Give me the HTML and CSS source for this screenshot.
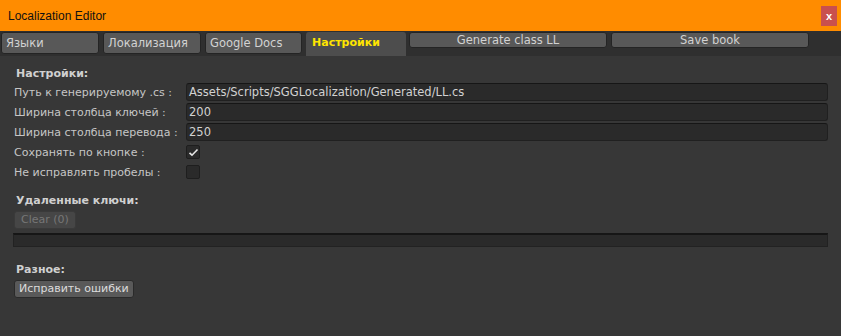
FILE: index.html
```html
<!DOCTYPE html>
<html lang="ru">
  <head>
    <meta charset="UTF-8" />
    <title>Localization Editor</title>
    <link rel="stylesheet" href="styles.css">
  </head>
  <body>
    <div class="titlebar">
      <span class="title">Localization Editor</span>
      <span class="close">x</span>
    </div>

    <div class="toolbar">
      <div class="tab">Языки</div>
      <div class="tab">Локализация</div>
      <div class="tab narrow">Google Docs</div>
      <div class="tab active">Настройки</div>
      <div class="tool-btn">Generate class LL</div>
      <div class="tool-btn">Save book</div>
    </div>

    <div class="content">
      <div class="header">Настройки:</div>

      <div class="row">
        <span class="label">Путь к генерируемому .cs :</span>
        <div class="field">Assets/Scripts/SGGLocalization/Generated/LL.cs</div>
      </div>
      <div class="row">
        <span class="label">Ширина столбца ключей :</span>
        <div class="field">200</div>
      </div>
      <div class="row">
        <span class="label">Ширина столбца перевода :</span>
        <div class="field">250</div>
      </div>
      <div class="row">
        <span class="label">Сохранять по кнопке :</span>
        <div class="checkbox">
          <svg width="11" height="9" viewBox="0 0 11 9"><path d="M1.5 4.8 L4 7.2 L9.5 1.5" fill="none" stroke="#e6e6e6" stroke-width="1.6"/></svg>
        </div>
      </div>
      <div class="row">
        <span class="label">Не исправлять пробелы :</span>
        <div class="checkbox"></div>
      </div>

      <div class="header deleted">Удаленные ключи:</div>
      <div class="btn disabled">Clear (0)</div>
      <div class="list"></div>

      <div class="header misc">Разное:</div>
      <div class="btn">Исправить ошибки</div>
    </div>
  </body>
</html>
```

FILE: styles.css
```css
body {
  margin: 0;
  background: #373737;
  font-family: "DejaVu Sans", Verdana, sans-serif;
  font-size: 11px;
  color: #c6c6c6;
  height: 336px;
  overflow: hidden;
}
.titlebar {
  height: 31px;
  background: #ff8c00;
  display: flex;
  align-items: center;
  padding: 0 4px 0 8px;
}
.title {
  font-family: "Liberation Sans", Arial, sans-serif;
  font-size: 12px;
  color: #111;
}
.close {
  margin-left: auto;
  width: 16px;
  height: 20px;
  background: #c9504e;
  color: #fff;
  font-family: "Liberation Sans", Arial, sans-serif;
  font-weight: bold;
  font-size: 11px;
  display: flex;
  align-items: center;
  justify-content: center;
}
.toolbar {
  height: 25px;
  background: #2f2f2f;
  display: flex;
  align-items: flex-start;
  padding: 1px 0 0 1px;
  box-sizing: border-box;
}
.tab {
  width: 98px;
  height: 22px;
  margin-right: 4px;
  box-sizing: border-box;
  background: #585858;
  border: 1px solid #242424;
  border-radius: 3px;
  padding-left: 4px;
  font-size: 11.5px;
  line-height: 20px;
  color: #d2d2d2;
}
.tab.narrow {
  width: 97px;
}
.tab.active {
  width: 100px;
  height: 24px;
  margin-right: 3px;
  background: #4d4d4d;
  border: none;
  border-radius: 3px 3px 0 0;
  padding-left: 6px;
  font-size: 11px;
  line-height: 22px;
  font-weight: bold;
  color: #ffe500;
}
.tool-btn {
  width: 198px;
  height: 16px;
  margin-right: 4px;
  box-sizing: border-box;
  background: #585858;
  border: 1px solid #242424;
  border-radius: 3px;
  text-align: center;
  font-size: 11.5px;
  line-height: 14px;
  color: #d2d2d2;
}
.content {
  padding: 10px 13px 0 14px;
}
.header {
  font-weight: bold;
  color: #d0d0d0;
  padding-left: 2px;
  height: 16px;
  line-height: 16px;
}
.row {
  display: flex;
  align-items: center;
  height: 20px;
}
.label {
  width: 172px;
  flex: none;
}
.field {
  flex: 1;
  height: 18px;
  box-sizing: border-box;
  background: #2a2a2a;
  border: 1px solid #202020;
  border-top-color: #161616;
  border-radius: 3px;
  padding-left: 2px;
  line-height: 16px;
  font-size: 11.5px;
  color: #d2d2d2;
}
.checkbox {
  width: 14px;
  height: 14px;
  box-sizing: border-box;
  background: #2a2a2a;
  border: 1px solid #1e1e1e;
  border-radius: 2px;
  display: flex;
  align-items: center;
  justify-content: center;
}
.header.deleted {
  margin-top: 11px;
}
.btn {
  width: fit-content;
  height: 18px;
  box-sizing: border-box;
  background: #595959;
  border: 1px solid #2a2a2a;
  border-radius: 3px;
  padding: 0 4px;
  line-height: 16px;
  font-size: 11px;
  color: #dcdcdc;
  margin-top: 2px;
}
.btn.disabled {
  padding: 0 6px;
  background: #464646;
  color: #777;
  border-color: #3a3a3a;
}
.list {
  height: 14px;
  margin: 4px 0 0 -1px;
  box-sizing: border-box;
  background: #2a2a2a;
  border: 1px solid #222;
  border-top: 2px solid #161616;
}
.header.misc {
  margin-top: 15px;
}
```
